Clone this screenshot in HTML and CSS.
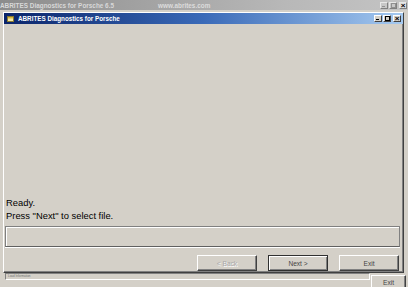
FILE: index.html
```html
<!DOCTYPE html>
<html>
<head lang="en">
    <meta charset="UTF-8">
    <title>ABRITES Diagnostics for Porsche</title>
    <link rel="stylesheet" href="styles.css">
</head>
<body>
<div class="screen">
    <div class="titlebar outer">
        <span class="title">ABRITES Diagnostics for Porsche 6.5</span>
        <span class="site">www.abrites.com</span>
        <div class="controls">
            <span class="ctl min"></span>
            <span class="ctl max"></span>
            <span class="ctl close">&#215;</span>
        </div>
    </div>
    <div class="workspace">
        <div class="dialog">
            <div class="titlebar inner">
                <svg class="app-icon" width="7" height="6" viewBox="0 0 7 6">
                    <rect x="0.5" y="0.5" width="6" height="5" fill="#f4e9a8" stroke="#8a7a30"/>
                    <rect x="1" y="1" width="5" height="1.5" fill="#d8b840"/>
                </svg>
                <span class="title">ABRITES Diagnostics for Porsche</span>
                <div class="controls">
                    <span class="ctl min"></span>
                    <span class="ctl max"></span>
                    <span class="ctl close">&#215;</span>
                </div>
            </div>
            <div class="dialog-body">
                <p class="message">Ready.<br>Press "Next" to select file.</p>
                <div class="info-box"></div>
                <div class="buttons">
                    <button class="btn" disabled>&lt; Back</button>
                    <button class="btn default">Next &gt;</button>
                    <button class="btn">Exit</button>
                </div>
            </div>
        </div>
    </div>
    <div class="footer">
        <div class="status-field">Load Information</div>
        <button class="btn exit">Exit</button>
    </div>
</div>
</body>
</html>
```

FILE: styles.css
```css
body{ margin: 0; padding: 0; background: #d4d0c8; }
.screen{ width: 408px; height: 287px; display: flex; flex-direction: column; overflow: hidden; background: #d4d0c8; font-family: "Liberation Sans", Arial, sans-serif; }

/* caption bars */
.titlebar{ display: flex; align-items: center; flex: none; white-space: nowrap; }
.titlebar .title{ font-weight: bold; font-size: 6.3px; }
.titlebar .controls{ margin-left: auto; display: flex; gap: 1px; }
.ctl{ width: 8px; height: 7px; box-sizing: border-box; background: #d4d0c8; border: 1px solid; border-color: #fff #404040 #404040 #fff; position: relative; font-size: 8px; line-height: 5px; text-align: center; font-weight: bold; color: #000; }
.ctl.min::after{ content: ""; position: absolute; left: 1px; bottom: 1px; width: 3px; height: 1px; background: #000; }
.ctl.max::after{ content: ""; position: absolute; left: 1px; top: 0; width: 3px; height: 3px; border: 1px solid #000; }
.ctl.close{ margin-left: 1px; }

.titlebar.outer{ height: 10px; background: linear-gradient(to right, #8c8c8c, #b8b8b8 70%, #c4c4c4); color: #d8d8d8; padding: 0 1px 0 0; }
.titlebar.outer .title{ font-size: 6.4px; }
.titlebar.outer .site{ font-size: 6.4px; font-weight: bold; margin-left: 44px; color: #dcdcdc; }
.titlebar.outer .ctl{ background: #c8c8c8; color: #707070; border-color: #e8e8e8 #808080 #808080 #e8e8e8; }
.titlebar.outer .ctl.min::after, .titlebar.outer .ctl.max::after{ background: #909090; border-color: #909090; }
.titlebar.outer .ctl.max::after{ background: none; }
.titlebar.outer .ctl.close{ color: #000; background: #e0e0e0; }

.titlebar.inner{ height: 11px; background: linear-gradient(to right, #0a246a, #3a6ab8 50%, #a6caf0); color: #fff; padding: 0 2px; }
.app-icon{ display: block; margin: 0 4px 0 1px; }

/* dialog window */
.workspace{ flex: none; padding: 2px 4px 0 3px; }
.dialog{ height: 261px; box-sizing: border-box; border: 1px solid; border-color: #fff #404040 #404040 #fff; box-shadow: inset -1px -1px #808080; display: flex; flex-direction: column; }
.dialog-body{ flex: 1; display: flex; flex-direction: column; justify-content: flex-end; padding: 0 3px 1px 1px; }
.message{ margin: 0 0 4px 1px; font-size: 9.4px; line-height: 13px; color: #000; }
.info-box{ height: 19px; border: 1px solid #808080; border-bottom-color: #606060; box-shadow: inset 1px 1px #fff, 0 1px #fff; }
.buttons{ display: flex; justify-content: flex-end; gap: 11px; margin-top: 8px; padding-right: 1px; }

.btn{ width: 60px; height: 16px; box-sizing: border-box; padding: 0; background: #d4d0c8; border: 1px solid; border-color: #fff #404040 #404040 #fff; box-shadow: inset -1px -1px #808080; font-family: "Liberation Sans", Arial, sans-serif; font-size: 6.6px; color: #444; }
.btn:disabled{ color: #a8a8a8; text-shadow: 1px 1px #fff; }
.btn.default{ border-color: #303030; box-shadow: inset 1px 1px #fff, inset -1px -1px #808080; }

/* outer window bottom */
.footer{ flex: 1; display: flex; align-items: flex-start; padding: 0 2px 0 5px; gap: 1px; }
.status-field{ flex: 1; height: 5px; border: 1px solid; border-color: #808080 #fff #fff #808080; font-size: 3px; line-height: 5px; color: #707070; padding-left: 2px; }
.btn.exit{ width: 35px; height: 14px; margin-top: 2px; }
```
